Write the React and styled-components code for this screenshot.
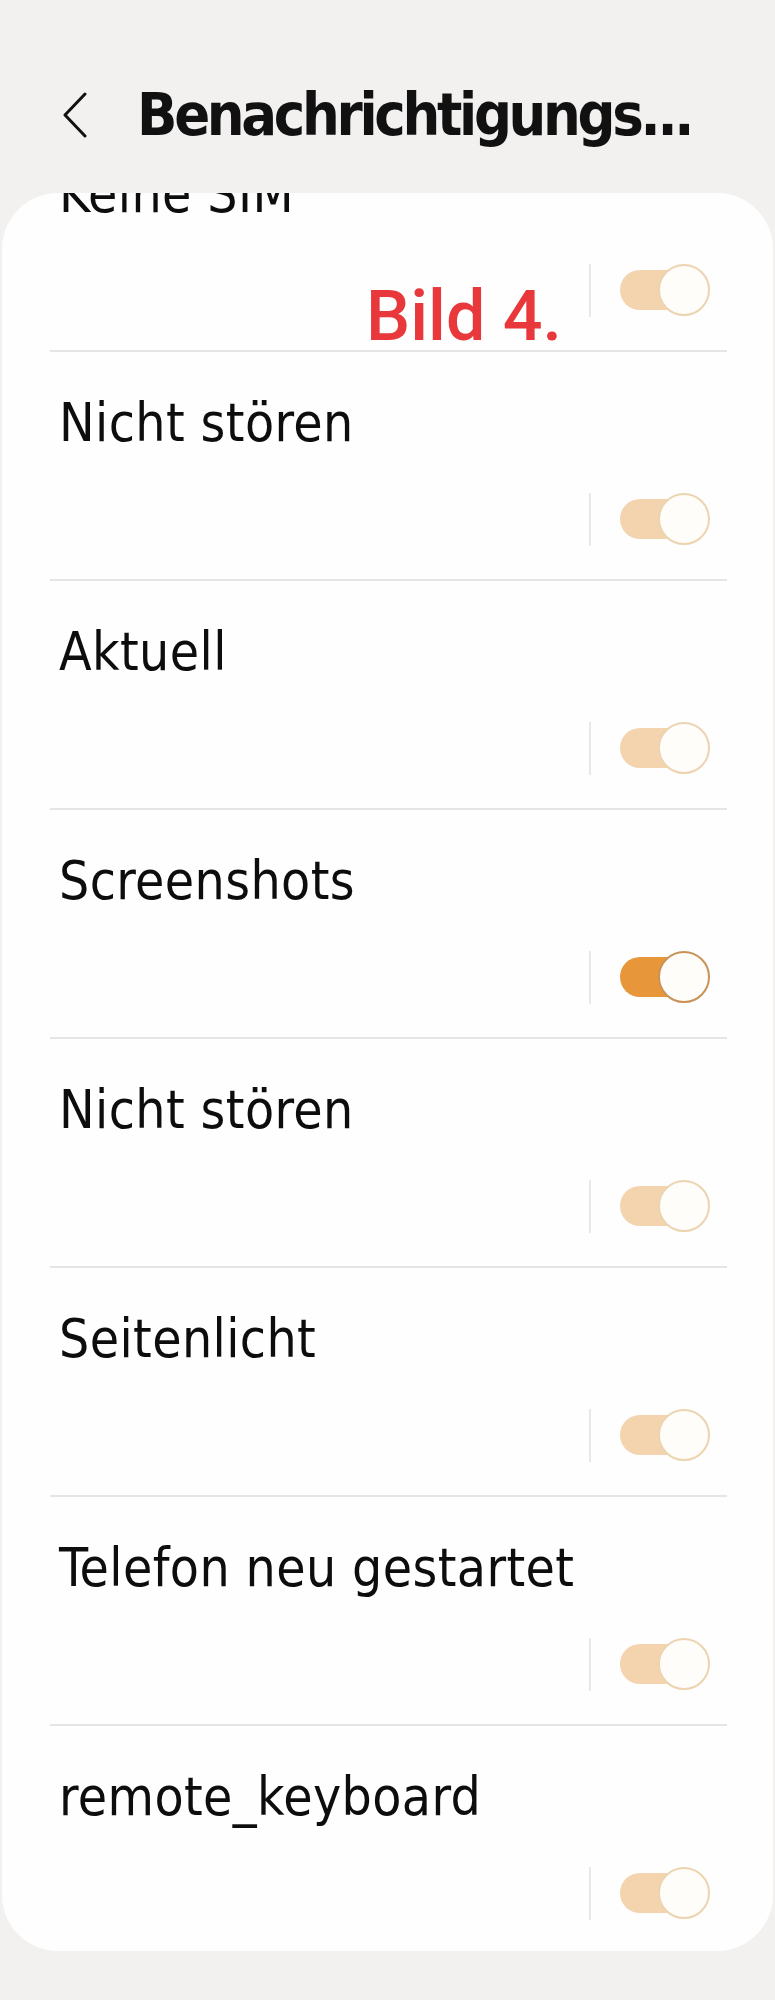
import React from "react";
import styled, { createGlobalStyle } from "styled-components";

const GlobalStyle = createGlobalStyle`
  html, body {
    margin: 0;
    padding: 0;
    background: #f2f1ef;
  }
  * {
    box-sizing: border-box;
  }
`;

const Page = styled.div`
  position: relative;
  width: 775px;
  height: 2000px;
  overflow: hidden;
  background: #f2f1ef;
  font-family: "DejaVu Sans Condensed", "DejaVu Sans", sans-serif;
  font-stretch: condensed;
  color: #111;
`;

const Header = styled.div`
  height: 193px;
  display: flex;
  align-items: flex-start;
  padding: 80px 0 0 60px;
`;

const BackButton = styled.div`
  width: 30px;
  height: 70px;
  margin-right: 47px;
  display: flex;
  align-items: center;
  justify-content: center;
`;

const Title = styled.h1`
  margin: 0;
  font-size: 59px;
  line-height: 70px;
  font-weight: 700;
  letter-spacing: -3.3px;
  white-space: nowrap;
  color: #111;
`;

const Card = styled.div`
  margin: 0 2px;
  height: 1758px;
  background: #fefefe;
  border-radius: 56px;
  overflow: hidden;
`;

const List = styled.div`
  margin-top: -70px;
`;

const Row = styled.div`
  height: 229px;
  margin: 0 46px 0 48px;
  display: flex;
  flex-direction: column;
  border-bottom: ${({ last }) => (last ? "none" : "2px solid #e5e5e5")};
`;

const Label = styled.div`
  padding: 39px 0 0 9px;
  font-size: 53px;
  line-height: 63px;
  letter-spacing: 0.4px;
  white-space: nowrap;
  color: #0d0d0d;
`;

const Controls = styled.div`
  margin-top: auto;
  margin-bottom: ${({ last }) => (last ? "35px" : "33px")};
  height: 54px;
  display: flex;
  align-items: center;
  justify-content: flex-end;
  padding-right: 17px;
`;

const Divider = styled.div`
  width: 2px;
  height: 53px;
  background: #e8e8e8;
  margin-right: 29px;
`;

const Switch = styled.div`
  position: relative;
  width: 90px;
  height: 52px;
`;

const Track = styled.div`
  position: absolute;
  left: 0;
  top: 6px;
  width: 72px;
  height: 40px;
  border-radius: 20px;
  background: ${({ on }) => (on ? "#e8963a" : "#f3d4ae")};
`;

const Knob = styled.div`
  position: absolute;
  right: 0;
  top: 0;
  width: 52px;
  height: 52px;
  border-radius: 50%;
  background: #fffdfa;
  border: 2.5px solid ${({ on }) => (on ? "#c99257" : "#ecd4b0")};
`;

const Stamp = styled.div`
  position: absolute;
  left: 366px;
  top: 281px;
  font-family: Roboto, "Liberation Sans", sans-serif;
  font-stretch: normal;
  font-weight: 500;
  font-size: 70px;
  line-height: 70px;
  color: #e8383b;
`;

const rows = [
  { label: "Keine SIM" },
  { label: "Nicht stören" },
  { label: "Aktuell" },
  { label: "Screenshots", on: true },
  { label: "Nicht stören" },
  { label: "Seitenlicht" },
  { label: "Telefon neu gestartet" },
  { label: "remote_keyboard" },
];

function Toggle({ on }) {
  return (
    <Switch>
      <Track on={on} />
      <Knob on={on} />
    </Switch>
  );
}

export default function App() {
  return (
    <Page>
      <GlobalStyle />
      <Header>
        <BackButton>
          <svg width="26" height="46" viewBox="0 0 26 46">
            <path
              d="M23 2 L3 23 L23 44"
              fill="none"
              stroke="#111"
              strokeWidth="3"
              strokeLinecap="round"
              strokeLinejoin="round"
            />
          </svg>
        </BackButton>
        <Title>Benachrichtigungs...</Title>
      </Header>
      <Card>
        <List>
          {rows.map((r, i) => {
            const last = i === rows.length - 1;
            return (
              <Row key={i} last={last}>
                <Label>{r.label}</Label>
                <Controls last={last}>
                  <Divider />
                  <Toggle on={r.on} />
                </Controls>
              </Row>
            );
          })}
        </List>
      </Card>
      <Stamp>Bild 4.</Stamp>
    </Page>
  );
}
